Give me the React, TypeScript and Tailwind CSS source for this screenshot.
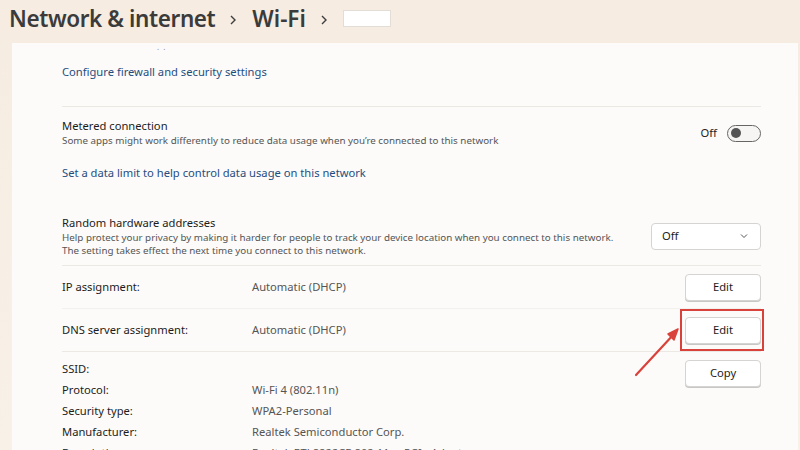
import React from 'react';

const font = { fontFamily: '"Noto Sans", "Open Sans", sans-serif' };

const Chevron: React.FC = () => (
  <svg width="10" height="12" viewBox="0 0 10 12" className="ml-[13px] mr-[14px] mt-[2px]">
    <path d="M3 2l4 4-4 4" fill="none" stroke="#3d3d3d" strokeWidth="1.4" />
  </svg>
);

const Button: React.FC<{ label: string }> = ({ label }) => (
  <button className="flex h-[27px] w-[76px] items-center justify-center rounded-[4px] border border-[#d6d4d2] bg-white text-[11.2px] text-[#1c1c1c] shadow-[0_1px_0_#c9c7c5]">
    {label}
  </button>
);

const Toggle: React.FC = () => (
  <div className="flex items-center gap-[10px]">
    <span className="text-[11.2px] text-[#1c1c1c]">Off</span>
    <div className="flex h-[17px] w-[34px] items-center rounded-full border border-[#666] bg-[#f6f5f3] px-[3px]">
      <div className="h-[10px] w-[10px] rounded-full bg-[#555]" />
    </div>
  </div>
);

const Property: React.FC<{ label: string; value?: string }> = ({ label, value }) => (
  <div className="flex h-[21px] items-center">
    <span className="w-[190px] text-[11.2px] text-[#1c1c1c]">{label}</span>
    <span className="text-[11.2px] text-[#555]">{value}</span>
  </div>
);

export default function App() {
  return (
    <div
      className="h-[450px] w-[800px] overflow-hidden bg-gradient-to-b from-[#f6ece1] to-[#f8f1e8]"
      style={font}
    >
      <header className="flex h-[43px] items-center pl-[9px] pb-[6px] text-[#3b3b3b]">
        <span className="text-[22.5px] font-semibold tracking-[-0.4px]">Network &amp; internet</span>
        <Chevron />
        <span className="text-[22.5px] font-semibold">Wi-Fi</span>
        <Chevron />
        <div className="h-[17px] w-[48px] border border-[#e2ddd6] bg-white" />
      </header>

      <main className="ml-[12px] mr-[2px] bg-[#fcfbf9] pr-[37px] pl-[50px]">
        <section className="relative h-[64px] border-b border-[#ece9e5]">
          <div className="absolute left-[95px] top-0 h-[3px] w-[20px] text-[8px] leading-none text-[#888]">. &nbsp;.</div>
          <div className="pt-[21px] text-[11.2px] text-[#1f4d80]">Configure firewall and security settings</div>
        </section>

        <section className="h-[159px] border-b border-[#ece9e5] pt-[11px]">
          <div className="flex items-center justify-between">
            <div>
              <div className="text-[11.2px] leading-[16px] text-[#1c1c1c]">Metered connection</div>
              <div className="text-[9.8px] leading-[14px] text-[#555]">
                Some apps might work differently to reduce data usage when you’re connected to this network
              </div>
            </div>
            <Toggle />
          </div>
          <div className="pt-[17px] text-[11.2px] text-[#1f4d80]">Set a data limit to help control data usage on this network</div>
          <div className="mt-[33px] flex items-start justify-between">
            <div>
              <div className="text-[11.2px] leading-[16px] text-[#1c1c1c]">Random hardware addresses</div>
              <div className="text-[9.8px] leading-[13px] text-[#555]">
                Help protect your privacy by making it harder for people to track your device location when you connect to this network.
              </div>
              <div className="text-[9.8px] leading-[13px] text-[#555]">
                The setting takes effect the next time you connect to this network.
              </div>
            </div>
            <div className="mt-[8px] flex h-[27px] w-[110px] items-center justify-between rounded-[4px] border border-[#d6d4d2] bg-white pl-[10px] pr-[12px] text-[11.2px] text-[#1c1c1c]">
              <span>Off</span>
              <svg width="8" height="6" viewBox="0 0 8 6">
                <path d="M1 1.5l3 3 3-3" fill="none" stroke="#555" strokeWidth="1" />
              </svg>
            </div>
          </div>
        </section>

        <section className="h-[86px] border-b border-[#ece9e5]">
          <div className="flex h-[43px] items-center justify-between border-b border-[#f3f1ee] pt-[1px]">
            <Property label="IP assignment:" value="Automatic (DHCP)" />
            <Button label="Edit" />
          </div>
          <div className="relative flex h-[43px] items-center justify-between">
            <Property label="DNS server assignment:" value="Automatic (DHCP)" />
            <Button label="Edit" />
            <div className="absolute right-[-3px] top-[0px] h-[42px] w-[84px] border-2 border-[#d9423b]" />
          </div>
        </section>

        <section className="relative h-[100px] pt-[7px]">
          <div className="flex items-start justify-between">
            <div>
              <Property label="SSID:" />
              <Property label="Protocol:" value="Wi-Fi 4 (802.11n)" />
              <Property label="Security type:" value="WPA2-Personal" />
              <Property label="Manufacturer:" value="Realtek Semiconductor Corp." />
              <Property label="Description:" value="Realtek RTL8822CE 802.11ac PCIe Adapter" />
            </div>
            <div className="mt-[1px]">
              <Button label="Copy" />
            </div>
          </div>
          <svg
            className="absolute left-[572px] top-[-26px]"
            width="50"
            height="52"
            viewBox="0 0 50 52"
          >
            <path d="M2 49L40 8" stroke="#d9423b" strokeWidth="2.2" strokeLinecap="round" />
            <path d="M44 3L34 8L40 14Z" fill="#d9423b" stroke="#d9423b" strokeWidth="1.5" strokeLinejoin="round" />
          </svg>
        </section>
      </main>
    </div>
  );
}
